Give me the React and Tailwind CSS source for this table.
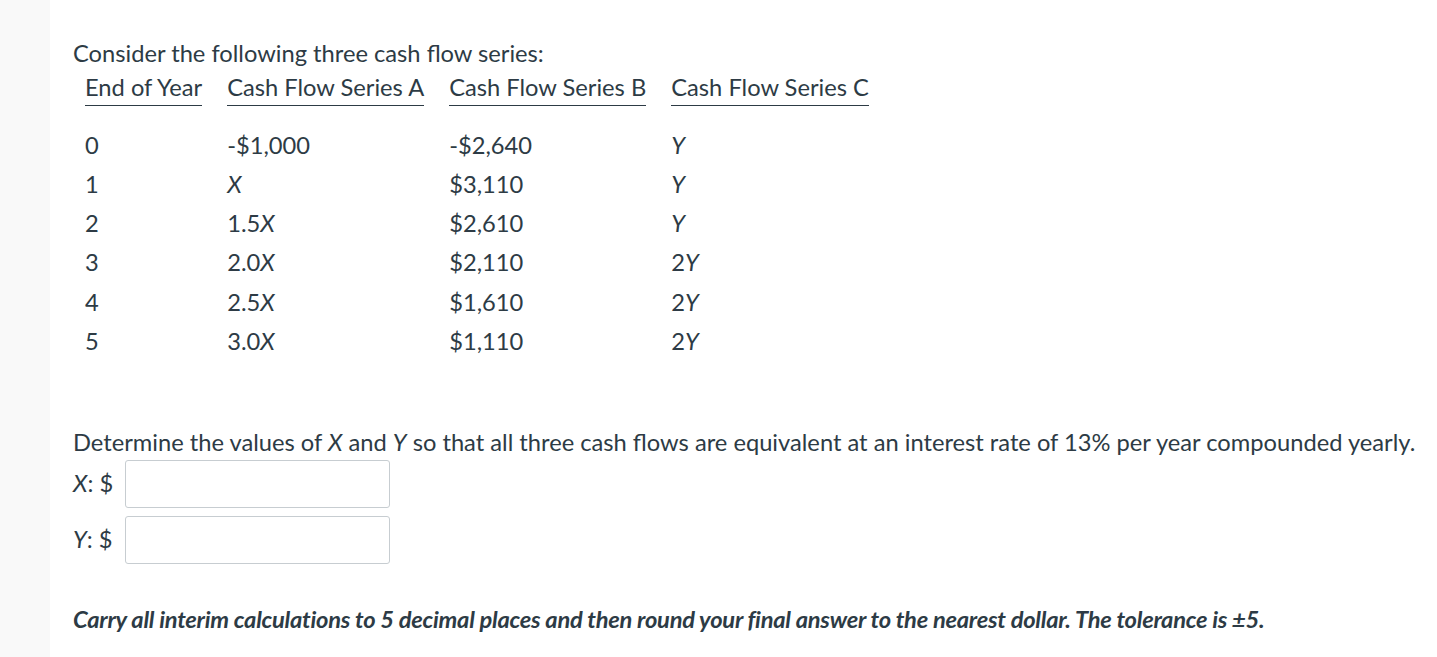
const rows = [
  { year: '0', a: '-$1,000', b: '-$2,640', c: 'Y' },
  { year: '1', a: 'X', b: '$3,110', c: 'Y' },
  { year: '2', a: '1.5X', b: '$2,610', c: 'Y' },
  { year: '3', a: '2.0X', b: '$2,110', c: '2Y' },
  { year: '4', a: '2.5X', b: '$1,610', c: '2Y' },
  { year: '5', a: '3.0X', b: '$1,110', c: '2Y' },
]

// italicize the X / Y variables inside a value
function Val({ text }) {
  const m = text.match(/^(.*?)([XY])$/)
  if (!m) return <span>{text}</span>
  return (
    <span>
      {m[1]}
      <i>{m[2]}</i>
    </span>
  )
}

const headers = ['End of Year', 'Cash Flow Series A', 'Cash Flow Series B', 'Cash Flow Series C']

export default function App() {
  return (
    <div
      className="flex min-h-[657px] bg-white text-[#2d3b45] text-[23.7px]"
      style={{ fontFamily: 'Lato, "Open Sans", sans-serif' }}
    >
      {/* left gutter */}
      <div className="w-[50px] shrink-0 bg-[#f9f9f9]" />

      <div className="pl-[23px] pt-[38px]">
        <p className="leading-[30px]">Consider the following three cash flow series:</p>

        {/* Table */}
        <table className="ml-[-13px] border-separate border-spacing-x-[25px] mt-[4px]">
          <thead>
            <tr>
              {headers.map((h) => (
                <th key={h} className="p-0 font-normal text-left">
                  <div className="border-b-[1.5px] border-[#2d3b45] leading-[30px] pb-[3px] whitespace-nowrap">
                    {h}
                  </div>
                </th>
              ))}
            </tr>
          </thead>
          <tbody>
            <tr>
              <td className="h-[20px]" colSpan={4} />
            </tr>
            {rows.map((r) => (
              <tr key={r.year} className="h-[39.2px]">
                <td className="p-0">{r.year}</td>
                <td className="p-0">
                  <Val text={r.a} />
                </td>
                <td className="p-0">
                  <Val text={r.b} />
                </td>
                <td className="p-0">
                  <Val text={r.c} />
                </td>
              </tr>
            ))}
          </tbody>
        </table>

        <p className="mt-[66px] leading-[30px]">
          Determine the values of <i>X</i> and <i>Y</i> so that all three cash flows are equivalent at an
          interest rate of 13% per year compounded yearly.
        </p>

        {/* Answer inputs */}
        <div className="mt-[3px] flex flex-col gap-[8px]">
          <label className="flex items-center gap-[12px]">
            <span>
              <i>X</i>: $
            </span>
            <input className="w-[265px] h-[48px] border border-[#c7cdd1] rounded-[3px] bg-white" />
          </label>
          <label className="flex items-center gap-[12px]">
            <span>
              <i>Y</i>: $
            </span>
            <input className="w-[265px] h-[48px] border border-[#c7cdd1] rounded-[3px] bg-white" />
          </label>
        </div>

        <p className="mt-[40px] font-bold italic leading-[30px] tracking-[-0.25px]">
          Carry all interim calculations to 5 decimal places and then round your final answer to the nearest
          dollar. The tolerance is ±5.
        </p>
      </div>
    </div>
  )
}
